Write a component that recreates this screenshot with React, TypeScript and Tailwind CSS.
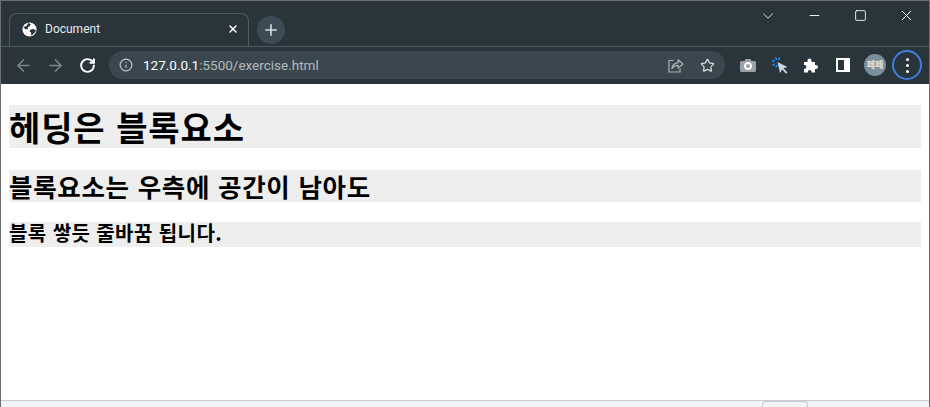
import { ArrowLeft, ArrowRight, ChevronDown, Info, Minus, Plus, RotateCw, Square, Star, X } from "lucide-react";

function Globe() {
  return (
    <svg width="15" height="15" viewBox="0 0 16 16" className="shrink-0">
      <circle cx="8" cy="8" r="7.500" fill="#fff" />
      <path d="M1.500 5.500 L5 4 L6.500 1 L9.500 2 L8 4.500 L6 5.500 L6.500 7.500 L4 8 Z" fill="#29343b" />
      <path d="M9 8 L12.500 7.500 L15 9 L12.500 12.500 L10 14.500 L9.500 11 L8 10 Z" fill="#29343b" />
    </svg>
  );
}

function ShareBox() {
  return (
    <svg width="16" height="15" viewBox="0 0 16 15" fill="none" stroke="#aab0b4" strokeWidth="1.200">
      <path d="M5.500 2.500 H1 V14 H12 V10.500" />
      <path d="M4 10.500 Q4.500 5 10 4.800 V1.800 L15 6 L10 10 V7.300 Q6 7 4 10.500 Z" strokeLinejoin="round" />
    </svg>
  );
}

function Camera() {
  return (
    <svg width="16" height="14" viewBox="0 0 16 14">
      <path d="M1.500 3 H4.500 L5.500 1 H10.500 L11.500 3 H14.500 Q16 3 16 4.500 V12.500 Q16 14 14.500 14 H1.500 Q0 14 0 12.500 V4.500 Q0 3 1.500 3 Z" fill="#9aa0a6" />
      <circle cx="8" cy="8" r="3" fill="none" stroke="#fff" strokeWidth="1.800" />
    </svg>
  );
}

function CursorClick() {
  return (
    <svg width="17" height="17" viewBox="0 0 17 17">
      <path d="M5.500 5 L15.500 10 L11.500 11.200 L15.500 15.500 L14 16.800 L10.200 12.500 L8 16 Z" fill="#c6d4e3" />
      <path d="M3.500 0.500 L4.800 3 M0 3.500 L2.800 4.500 M0.500 8.500 L2.800 7 M7.500 0.500 L6.800 3 M5 8 L4 10.500" stroke="#1a86e8" strokeWidth="1.800" fill="none" />
    </svg>
  );
}

function Puzzle() {
  return (
    <svg width="15" height="15" viewBox="0 0 15 15">
      <path d="M1 4 H4.500 V2.500 A2 2 0 0 1 8.500 2.500 V4 H12 V7 H13 A2 2 0 0 1 13 11 H12 V14.500 H8.500 V13.500 A1.800 1.800 0 0 0 5 13.500 V14.500 H1 V10.800 H2 A2 2 0 0 0 2 7 H1 Z" fill="#fff" />
    </svg>
  );
}

function SidePanel() {
  return <div className="h-[14px] w-[14px] border-2 border-r-[6px] border-white bg-[#29343b]" />;
}

export default function App() {
  return (
    <div className="flex h-[407px] w-[930px] flex-col overflow-hidden border-x border-t border-[#6e6e6e] bg-white font-['Roboto',sans-serif]">
      {/* tab strip */}
      <div className="flex h-[45px] shrink-0 items-end bg-[#29343b] pl-[8px]">
        <div className="flex h-[33px] w-[240px] items-center rounded-t-lg border-x border-t border-[#4f5b62] pb-[2px] pl-[12px] pr-[9px] text-white">
          <Globe />
          <span className="ml-[8px] flex-1 text-xs text-[#e8eaed]">Document</span>
          <X size={12} strokeWidth={3} />
        </div>
        <div className="mb-[2px] ml-2 flex h-7 w-7 items-center justify-center rounded-full bg-[#3c4c57] text-[#d5dadd]">
          <Plus size={18} strokeWidth={2.2} />
        </div>
        <div className="ml-auto flex h-full items-start text-white">
          <div className="flex h-[29px] w-[46px] items-center justify-center"><ChevronDown size={18} strokeWidth={1.1} /></div>
          <div className="flex h-[29px] w-[46px] items-center justify-center"><Minus size={15} strokeWidth={1.5} /></div>
          <div className="flex h-[29px] w-[46px] items-center justify-center"><Square size={13} strokeWidth={1.6} /></div>
          <div className="flex h-[29px] w-[46px] items-center justify-center"><X size={17} strokeWidth={1.4} /></div>
        </div>
      </div>

      {/* toolbar */}
      <div className="flex h-[38px] shrink-0 items-center border-t border-[#4f5b62] bg-[#29343b] pb-[1px]">
        <ArrowLeft size={19} className="ml-[13px] text-[#7c868c]" />
        <ArrowRight size={19} className="ml-[13px] text-[#7c868c]" />
        <RotateCw size={17} strokeWidth={2.8} className="ml-[14px] text-white" />
        <div className="ml-[13px] flex h-7 w-[616px] items-center rounded-full bg-[#3b474e] pl-[10px] pr-[10px]">
          <Info size={14} className="text-[#c4c9cc]" />
          <span className="ml-[10px] flex-1 text-[13.5px] text-[#b4babd]">
            <span className="text-white">127.0.0.1</span>:5500/exercise.html
          </span>
          <ShareBox />
          <Star size={15} className="ml-[16px] text-[#d5dadd]" />
        </div>
        <div className="ml-[15px] flex items-center">
          <Camera />
          <div className="ml-[16px]"><CursorClick /></div>
          <div className="ml-[14px]"><Puzzle /></div>
          <div className="ml-[18px]"><SidePanel /></div>
          <div className="ml-[14px] flex h-[22px] w-[22px] items-center justify-center rounded-full bg-[#7b8f9b] font-['Noto_Sans_CJK_KR',sans-serif] text-[9px] font-bold text-[#dfe4e7]">
            페페
          </div>
          <div className="ml-[6px] flex h-[30px] w-[30px] flex-col items-center justify-center gap-[3px] rounded-full border-2 border-[#3f7fdc]">
            <span className="h-[3px] w-[3px] rounded-full bg-white" />
            <span className="h-[3px] w-[3px] rounded-full bg-white" />
            <span className="h-[3px] w-[3px] rounded-full bg-white" />
          </div>
        </div>
      </div>

      {/* page */}
      <div className="flex-1 px-2 pt-[21px] font-['Noto_Sans_CJK_KR',sans-serif] font-bold text-black">
        <h1 className="h-[43px] bg-[#eeeeee] text-[34px] leading-[43px] tracking-[0.9px] [word-spacing:2px]">헤딩은 블록요소</h1>
        <h2 className="mt-[22px] h-[32px] bg-[#eeeeee] text-[25.5px] leading-[32px] tracking-[0.68px] [word-spacing:1.5px]">블록요소는 우측에 공간이 남아도</h2>
        <h3 className="mt-[20px] h-[25px] bg-[#eeeeee] text-[20px] leading-[21px] tracking-[0.43px] [word-spacing:1px]">블록 쌓듯 줄바꿈 됩니다.</h3>
      </div>

      {/* bottom bar */}
      <div className="relative h-[7px] shrink-0 border-t border-[#c8ccd4] bg-[#f1f3f4]">
        <div className="absolute left-[761px] top-0 h-[6px] w-[46px] rounded-t border-x border-t border-[#c8ccd4]" />
      </div>
    </div>
  );
}
